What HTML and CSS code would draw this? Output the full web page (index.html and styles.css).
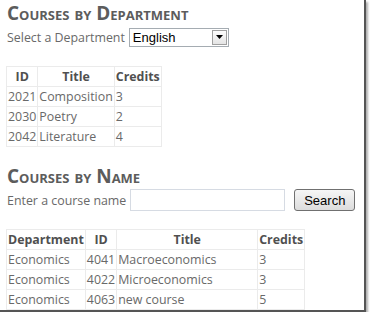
FILE: index.html
```html
<!DOCTYPE html>
<html>
<head>
  <meta charset="UTF-8">
  <title>Courses</title>
  <link rel="stylesheet" href="styles.css">
</head>
<body>
  <div class="window">
    <h2>Courses by Department</h2>
    <div class="field-row">
      <label for="department">Select a Department</label>
      <div class="select-box" id="department">
        <span class="select-value">English</span>
        <span class="select-arrow">
          <svg width="7" height="4" viewBox="0 0 7 4"><path d="M0 0h7L3.5 4z" fill="#000"/></svg>
        </span>
      </div>
    </div>

    <table class="grid grid-dept">
      <tr>
        <th>ID</th>
        <th>Title</th>
        <th>Credits</th>
      </tr>
      <tr>
        <td>2021</td>
        <td>Composition</td>
        <td>3</td>
      </tr>
      <tr>
        <td>2030</td>
        <td>Poetry</td>
        <td>2</td>
      </tr>
      <tr>
        <td>2042</td>
        <td>Literature</td>
        <td>4</td>
      </tr>
    </table>

    <h2 class="second">Courses by Name</h2>
    <div class="field-row">
      <label for="course-name">Enter a course name</label>
      <input type="text" id="course-name" class="text-box">
      <button class="search-btn">Search</button>
    </div>

    <table class="grid grid-name">
      <tr>
        <th>Department</th>
        <th>ID</th>
        <th class="wide">Title</th>
        <th>Credits</th>
      </tr>
      <tr>
        <td>Economics</td>
        <td>4041</td>
        <td>Macroeconomics</td>
        <td>3</td>
      </tr>
      <tr>
        <td>Economics</td>
        <td>4022</td>
        <td>Microeconomics</td>
        <td>3</td>
      </tr>
      <tr>
        <td>Economics</td>
        <td>4063</td>
        <td>new course</td>
        <td>5</td>
      </tr>
      <tr class="filler">
        <td></td>
        <td></td>
        <td></td>
        <td></td>
      </tr>
    </table>
  </div>
</body>
</html>
```

FILE: styles.css
```css
body {
  margin: 0;
  background-color: #fff;
  font-family: "Open Sans", Arial, sans-serif;
  font-size: 12.4px;
  color: #696969;
}

.window {
  width: 366px;
  height: 312px;
  padding-left: 7px;
  box-sizing: border-box;
  border-right: 2px solid #555;
  border-bottom: 2px solid #555;
  box-shadow: 2px 2px 2px #b0b0b0;
  overflow: hidden;
}

h2 {
  margin: 0;
  padding-top: 2px;
  font-size: 19px;
  line-height: 22px;
  font-variant: small-caps;
  font-weight: bold;
  color: #5c5c5c;
}

h2.second {
  margin-top: 16px;
}

.field-row {
  display: flex;
  align-items: center;
  height: 22px;
  margin-top: 2px;
}

label {
  margin-right: 4px;
}

.select-box {
  display: flex;
  align-items: center;
  width: 100px;
  height: 19px;
  border: 1px solid #a5acb2;
  box-sizing: border-box;
  font-family: "Liberation Sans", Arial, sans-serif;
  font-size: 13px;
  color: #000;
}

.select-value {
  flex: 1;
  padding-left: 3px;
}

.select-arrow {
  display: flex;
  align-items: center;
  justify-content: center;
  width: 15px;
  height: 15px;
  margin-right: 1px;
  border: 1px solid #a0a0a0;
  box-sizing: border-box;
  background: linear-gradient(#fdfdfd, #e4e4e4);
}

.text-box {
  width: 155px;
  height: 22px;
  margin: 0 9px 0 0;
  padding: 0;
  border: 1px solid #d6dbe3;
  box-sizing: border-box;
}

.search-btn {
  width: 61px;
  height: 22px;
  padding: 0;
  border: 1px solid #707070;
  border-radius: 3px;
  background: linear-gradient(#f6f6f6, #dcdcdc);
  font-family: "Liberation Sans", Arial, sans-serif;
  font-size: 13px;
  color: #000;
}

.grid {
  border-collapse: collapse;
  margin-left: -1px;
  border-right: 1px solid #a0a0a0;
  border-bottom: 1px solid #a0a0a0;
}

.grid-dept {
  margin-top: 18px;
}

.grid-name {
  margin-top: 18px;
}

.grid th,
.grid td {
  border: 1px solid #ebebeb;
  padding: 0 1px;
  height: 19px;
  text-align: left;
  white-space: nowrap;
}

.grid th {
  text-align: center;
  font-weight: bold;
  color: #505050;
}

.grid-name th.wide {
  width: 138px;
}

.grid-name td:nth-child(4) {
  width: 44px;
}
```
